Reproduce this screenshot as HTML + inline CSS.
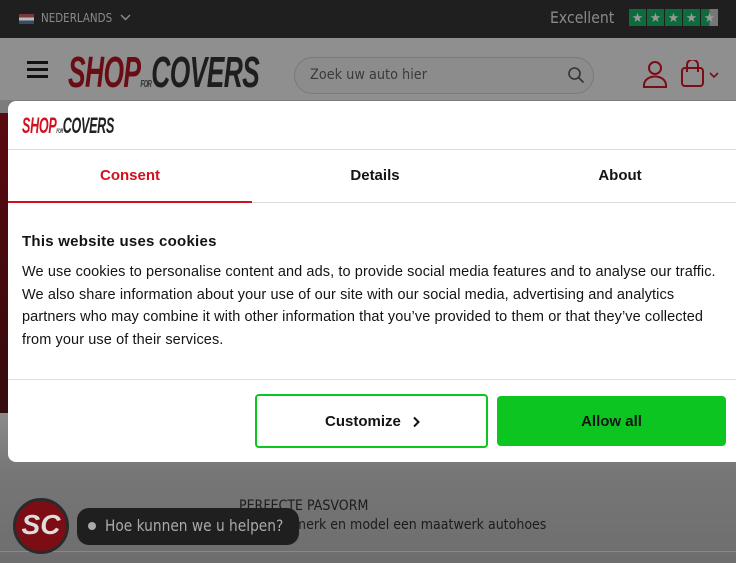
<!DOCTYPE html>
<html><head><meta charset="utf-8"><style>
*{margin:0;padding:0;box-sizing:border-box}
body{width:750px;height:563px;overflow:hidden;background:#fff;position:relative;font-family:"Liberation Sans",sans-serif}
.page{position:absolute;left:0;top:0;width:736px;height:563px;background:#7c7c7c;overflow:hidden}
.top{position:absolute;left:0;top:0;width:736px;height:38px;background:#1f1f1f}
.hdr{position:absolute;left:0;top:38px;width:736px;height:62px;background:#8f8f8f}
.hero{position:absolute;left:0;top:113px;width:736px;height:300px;background:linear-gradient(135deg,#5a0a10 0%,#3a0a0c 25%,#1a1a1a 50%,#0a0a0a 100%)}
.below{position:absolute;left:0;top:413px;width:736px;height:150px;background:linear-gradient(#8a8a8a,#767676 40%,#6e6e6e)}
.dlg{position:absolute;left:8px;top:101px;width:736px;height:361px;background:#fff;border-radius:8px}
.t{position:absolute;white-space:nowrap}
</style></head><body>
<div class="page">
 <div class="top">
  <div style="position:absolute;left:19px;top:14px;width:15px;height:10px;background:linear-gradient(#7a3a3a 33%,#bbb 33% 66%,#3a4a6a 66%)"></div>
  <div class="t" style="left:41px;top:11px;color:#8a8a8a;font-family:'DejaVu Sans',sans-serif;font-size:12px;transform:scaleX(.86);transform-origin:left">NEDERLANDS</div>
  <svg style="position:absolute;left:120px;top:14px" width="11" height="8"><path d="M1 1l4.5 4.5L10 1" stroke="#8a8a8a" stroke-width="1.5" fill="none"/></svg>
  <div class="t" style="left:550px;top:8px;font-size:16px;color:#8a8a8a;font-family:'DejaVu Sans',sans-serif;transform:scaleX(.88);transform-origin:left">Excellent</div>
  <div style="position:absolute;left:629px;top:9px;display:flex;gap:1px">
   <span style="width:17px;height:17px;background:#0d6b3e;color:#999;font-size:13px;text-align:center;line-height:17px">★</span>
   <span style="width:17px;height:17px;background:#0d6b3e;color:#999;font-size:13px;text-align:center;line-height:17px">★</span>
   <span style="width:17px;height:17px;background:#0d6b3e;color:#999;font-size:13px;text-align:center;line-height:17px">★</span>
   <span style="width:17px;height:17px;background:#0d6b3e;color:#999;font-size:13px;text-align:center;line-height:17px">★</span>
   <span style="width:17px;height:17px;background:linear-gradient(90deg,#0d6b3e 50%,#777 50%);color:#999;font-size:13px;text-align:center;line-height:17px">★</span>
  </div>
 </div>
 <div class="hdr">
  <div style="position:absolute;left:27px;top:30px;width:21px;height:3px;background:#111;box-shadow:0 -7px #111,0 7px #111"></div>
  <div class="t" style="left:68px;top:10px;font-size:44px;line-height:50px;font-weight:bold;font-style:italic;letter-spacing:-1px;transform:scaleX(0.6);transform-origin:left"><span style="color:#6a0c14">SHOP</span><span style="font-size:10px;color:#333">FOR</span><span style="color:#1e1e1e">COVERS</span></div>
  <div style="position:absolute;left:294px;top:19px;width:300px;height:37px;border:1px solid #7a7a7a;border-radius:19px;background:#8c8c8c"></div>
  <div class="t" style="left:310px;top:29px;font-size:14px;color:#3a3a3a;font-family:'DejaVu Sans',sans-serif;transform:scaleX(.92);transform-origin:left">Zoek uw auto hier</div>
  <svg style="position:absolute;left:567px;top:28px" width="18" height="18"><circle cx="7.5" cy="7.5" r="5.5" stroke="#333" stroke-width="1.6" fill="none"/><path d="M11.5 11.5l5 5" stroke="#333" stroke-width="1.6"/></svg>
  <svg style="position:absolute;left:642px;top:22px" width="26" height="28"><circle cx="13" cy="8" r="6" stroke="#7a0d18" stroke-width="2" fill="none"/><path d="M2 27v-2a9 7 0 0 1 22 0v2z" stroke="#7a0d18" stroke-width="2" fill="none"/></svg>
  <svg style="position:absolute;left:680px;top:22px" width="44" height="28"><rect x="2" y="8" width="21" height="18" rx="3" stroke="#7a0d18" stroke-width="2" fill="none"/><path d="M7 12V5a5.5 5.5 0 0 1 11 0v7" stroke="#7a0d18" stroke-width="2" fill="none"/><path d="M30 13l4 4 4-4" stroke="#7a0d18" stroke-width="1.6" fill="none"/></svg>
 </div>
 <div class="hero"></div>
 <div class="below">
  <div class="t" style="left:239px;top:85px;font-size:14px;color:#1c1c1c;font-family:'DejaVu Sans',sans-serif;transform:scaleX(.9);transform-origin:left">PERFECTE PASVORM</div>
  <div class="t" style="left:239px;top:104px;font-size:14px;color:#1c1c1c;font-family:'DejaVu Sans',sans-serif;transform:scaleX(.9);transform-origin:left">Voor elk merk en model een maatwerk autohoes</div>
  <div style="position:absolute;left:0;top:138px;width:736px;height:1px;background:#888"></div>
 </div>
 <div style="position:absolute;left:13px;top:498px;width:56px;height:56px;border-radius:50%;background:#7c0d15;border:3px solid #2a2a2a;color:#ddd;font-weight:bold;font-style:italic;font-size:28px;text-align:center;line-height:48px">SC</div>
 <div style="position:absolute;left:77px;top:508px;width:222px;height:37px;border-radius:12px;background:#1f1f1f"></div>
 <div style="position:absolute;left:88px;top:522px;width:8px;height:8px;border-radius:50%;background:#aaa"></div>
 <div class="t" style="left:105px;top:516px;font-size:16px;color:#aaa;font-family:'DejaVu Sans',sans-serif;transform:scaleX(.86);transform-origin:left">Hoe kunnen we u helpen?</div>
</div>
<div class="dlg">
 <div class="t" style="left:14px;top:12px;font-size:22px;line-height:26px;font-weight:bold;font-style:italic;letter-spacing:-0.5px;transform:scaleX(.57);transform-origin:left"><span style="color:#d2101f">SHOP</span><span style="font-size:6px;color:#333">FOR</span><span style="color:#222">COVERS</span></div>
 <div style="position:absolute;left:0;top:48px;width:728px;height:1px;background:#ddd"></div>
 <div class="t" style="left:0;width:244px;top:66px;text-align:center;font-size:15px;font-weight:bold;color:#d2101f">Consent</div>
 <div class="t" style="left:244px;width:246px;top:66px;text-align:center;font-size:15px;font-weight:bold;color:#141414">Details</div>
 <div class="t" style="left:490px;width:244px;top:66px;text-align:center;font-size:15px;font-weight:bold;color:#141414">About</div>
 <div style="position:absolute;left:0;top:101px;width:728px;height:1px;background:#ddd"></div>
 <div style="position:absolute;left:0;top:100px;width:244px;height:2px;background:#d2101f"></div>
 <div class="t" style="left:14px;top:132px;font-size:15px;font-weight:bold;color:#141414;letter-spacing:.25px">This website uses cookies</div>
 <div class="t" style="left:14px;top:160px;font-size:14.5px;line-height:22.6px;color:#141414;letter-spacing:.1px">We use cookies to personalise content and ads, to provide social media features and to analyse our traffic.<br>We also share information about your use of our site with our social media, advertising and analytics<br>partners who may combine it with other information that you’ve provided to them or that they’ve collected<br>from your use of their services.</div>
 <div style="position:absolute;left:0;top:278px;width:728px;height:1px;background:#ddd"></div>
 <div style="position:absolute;left:247px;top:293px;width:233px;height:54px;border:2px solid #0cc521;border-radius:4px"></div>
 <div class="t" style="left:317px;top:312px;font-size:15px;font-weight:bold;color:#141414">Customize</div>
 <svg style="position:absolute;left:404px;top:315px" width="8" height="12"><path d="M2 1.5l4.5 4.5L2 10.5" stroke="#141414" stroke-width="2" fill="none"/></svg>
 <div style="position:absolute;left:489px;top:295px;width:229px;height:50px;background:#0cc521;border-radius:4px"></div>
 <div class="t" style="left:489px;width:229px;top:312px;text-align:center;font-size:15px;font-weight:bold;color:#141414">Allow all</div>
</div>
</body></html>
